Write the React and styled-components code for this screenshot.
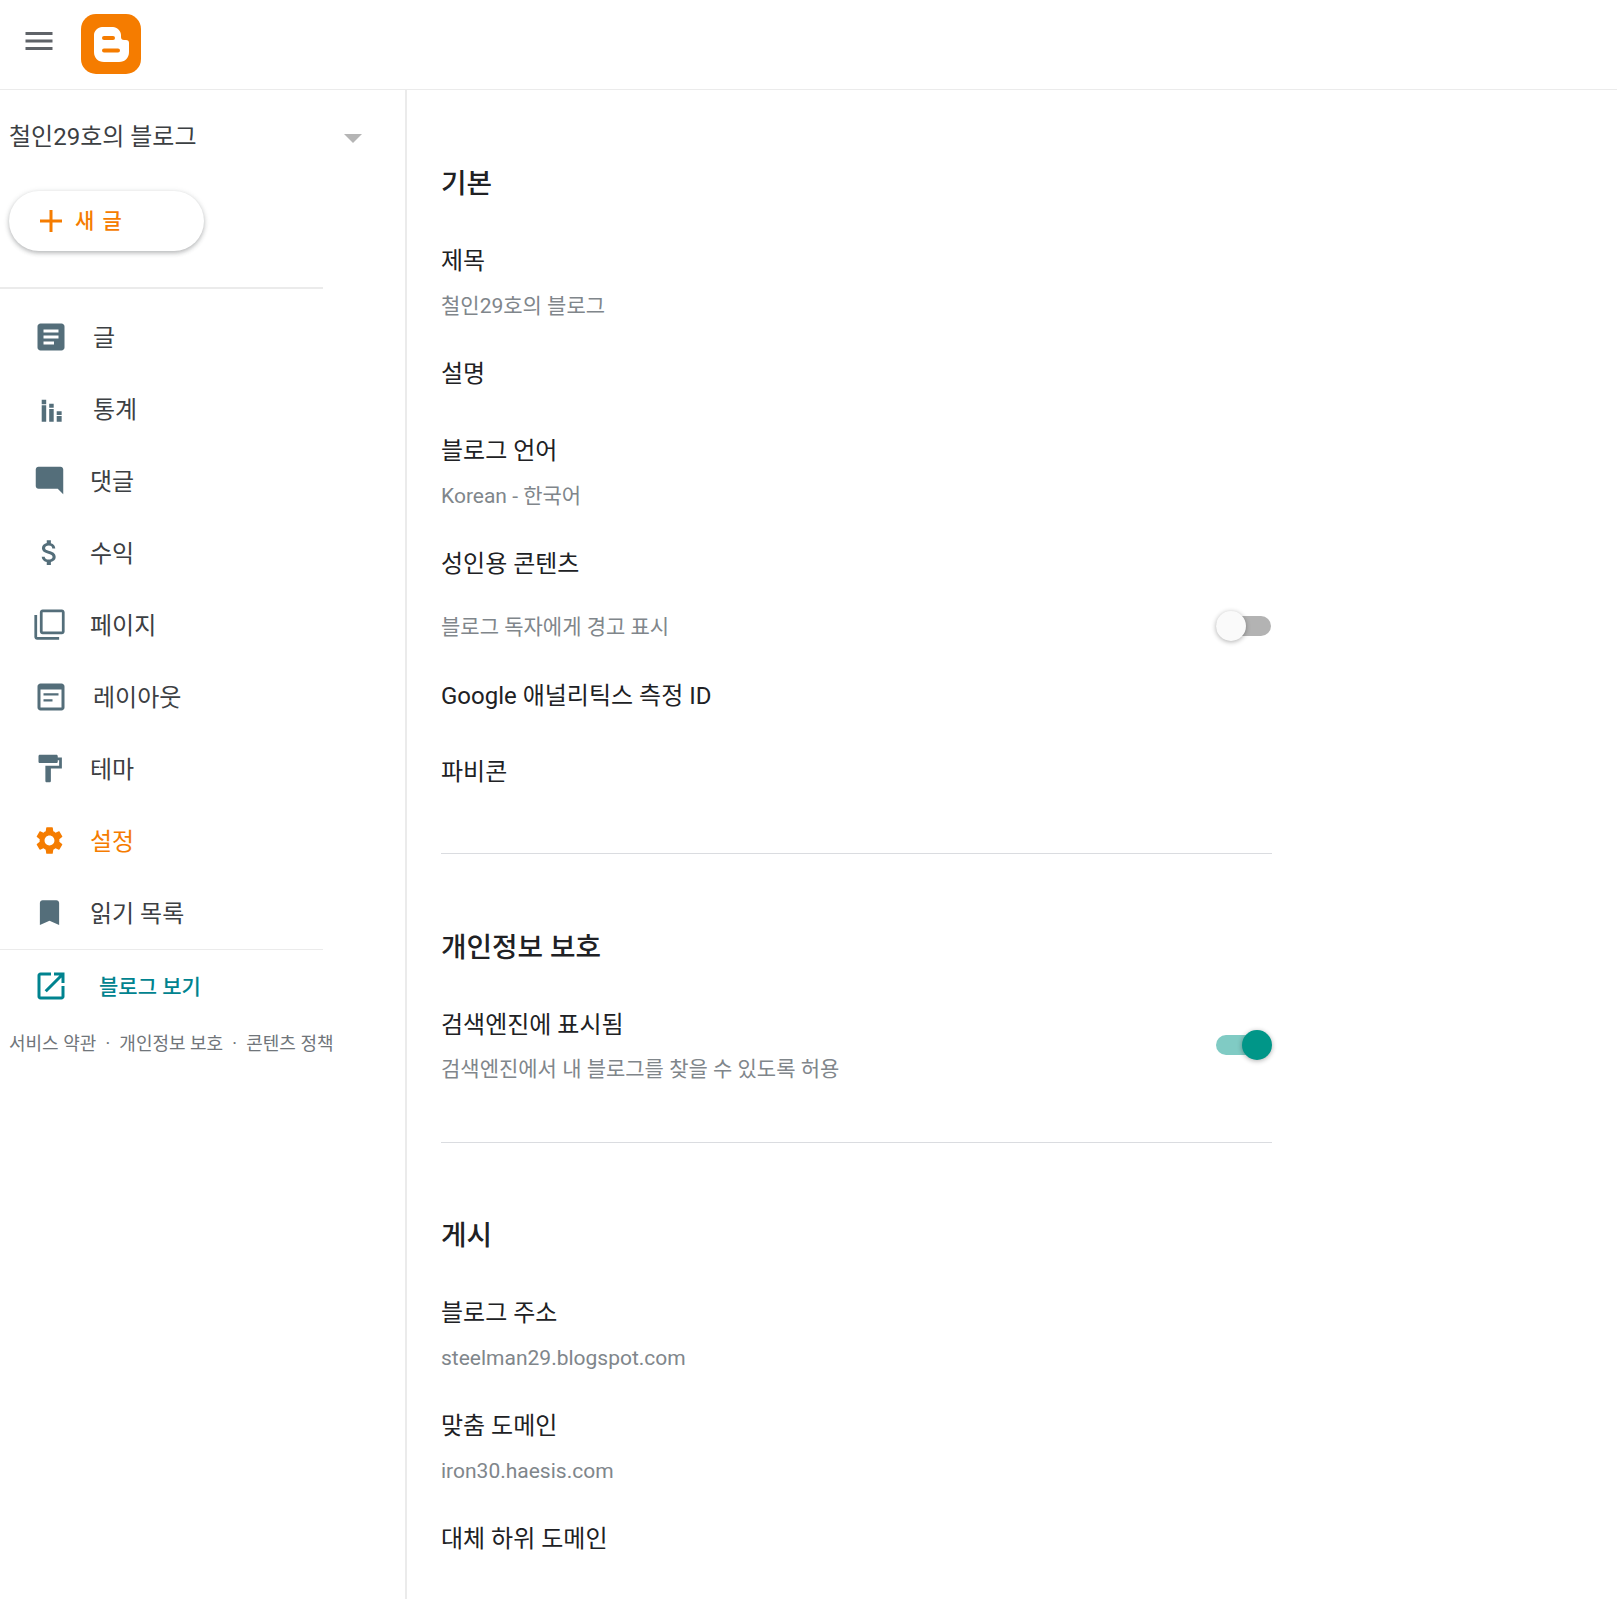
import styled, { createGlobalStyle } from "styled-components";

const GlobalStyle = createGlobalStyle`
  html, body {
    margin: 0;
    padding: 0;
    background: #ffffff;
  }
  body {
    font-family: Roboto, "Noto Sans CJK KR", sans-serif;
    color: #202124;
  }
`;

const Page = styled.div`
  height: 100vh;
  overflow: hidden;
  display: flex;
  flex-direction: column;
`;

const TopBar = styled.header`
  flex: none;
  box-sizing: border-box;
  height: 90px;
  display: flex;
  align-items: center;
  padding: 0 0 2px 21px;
  gap: 24px;
  border-bottom: 1px solid #ebebeb;
`;

const MenuButton = styled.svg`
  width: 36px;
  height: 36px;
  margin-bottom: 6px;
  fill: #5f6368;
`;

const Body = styled.div`
  flex: 1;
  display: flex;
  min-height: 0;
`;

const Sidebar = styled.aside`
  flex: none;
  box-sizing: border-box;
  width: 407px;
  border-right: 2px solid #ebebeb;
`;

const BlogPicker = styled.div`
  height: 92px;
  display: flex;
  align-items: center;
  justify-content: space-between;
  padding: 0 43px 0 9px;
`;

const BlogName = styled.span`
  padding-bottom: 4px;
  font-size: 24px;
  color: #3c4043;
`;

const Caret = styled.span`
  margin-top: 4px;
  border-top: 9px solid #b5b5b5;
  border-left: 9px solid transparent;
  border-right: 9px solid transparent;
`;

const NewPost = styled.button`
  box-sizing: border-box;
  display: flex;
  align-items: center;
  gap: 13px;
  width: 195px;
  height: 60px;
  margin: 9px 0 36px 9px;
  padding: 0 0 0 31px;
  border: 0;
  border-radius: 30px;
  background: #ffffff;
  box-shadow: 0 2px 4px rgba(60, 64, 67, 0.3), 0 1px 6px rgba(60, 64, 67, 0.12);
  color: #f57c00;
  font-family: inherit;
  font-size: 21px;
  font-weight: 500;
  letter-spacing: 1.5px;
  span {
    padding-bottom: 4px;
  }
`;

const Nav = styled.nav`
  width: 323px;
  border-top: 2px solid #ebebeb;
  padding-top: 12px;
  border-bottom: 1px solid #ebebeb;
`;

const NavItem = styled.a`
  height: 72px;
  display: flex;
  align-items: center;
  padding-left: 33px;
  font-size: 24px;
  color: ${props => (props.$active ? "#f57c00" : "#3c4043")};
`;

const NavIcon = styled.svg`
  flex: none;
  width: ${props => (props.$small ? "33px" : "36px")};
  height: ${props => (props.$small ? "33px" : "36px")};
  margin: ${props => (props.$small ? "0.5px 2.5px 2.5px -0.5px" : "0")};
  fill: ${props => (props.$active ? "#f57c00" : "#546e7a")};
`;

const NavText = styled.span`
  padding-bottom: 4px;
  margin-left: ${props => (props.$wide ? "24px" : "22px")};
`;

const ViewBlog = styled.a`
  height: 70px;
  display: flex;
  align-items: center;
  padding-left: 33px;
  font-size: 21px;
  font-weight: 500;
  color: #00838f;
  svg {
    flex: none;
    width: 36px;
    height: 36px;
    margin-top: 2px;
    fill: #00838f;
  }
  span {
    margin-left: 30px;
  }
`;

const Legal = styled.div`
  display: flex;
  gap: 9.2px;
  padding: 10px 0 0 9px;
  font-size: 18px;
  line-height: 28px;
  color: #70757a;
  white-space: nowrap;
`;

const Main = styled.main`
  flex: 1;
  padding-left: 34px;
`;

const Heading = styled.h2`
  margin: 0 0 19px;
  font-size: 27.75px;
  line-height: 40px;
  font-weight: 500;
  color: #202124;
`;

const Section = styled.section`
  width: 831px;
  padding: ${props => (props.$last ? "73px" : "74px")} 0 43px;
  border-bottom: ${props => (props.$last ? "0" : "1px solid #dadce0")};
`;

const Field = styled.div`
  box-sizing: border-box;
  min-height: ${props => (props.$tall ? "77px" : "76px")};
  padding: 20px 0 15px;
`;

const Label = styled.div`
  font-size: 24px;
  line-height: 36px;
  color: #202124;
`;

const Value = styled.div`
  margin-top: 12px;
  font-size: 21px;
  line-height: 30px;
  color: #80868b;
`;

const ToggleRow = styled.div`
  height: 46px;
  margin-bottom: 10px;
  display: flex;
  align-items: center;
  justify-content: space-between;
  font-size: 21px;
  color: #80868b;
`;

const ToggleField = styled.div`
  display: flex;
  align-items: center;
  justify-content: space-between;
  ${Value} {
    margin-top: 11px;
  }
`;

const Track = styled.span`
  position: relative;
  flex: none;
  width: 55px;
  height: 20px;
  margin: ${props => (props.$on ? "4px" : "2px")} 1px 0 0;
  border-radius: 10px;
  background: ${props => (props.$on ? "#80cbc4" : "#b3b3b3")};
`;

const Thumb = styled.span`
  position: absolute;
  top: -5px;
  left: ${props => (props.$on ? "26px" : "0")};
  width: 30px;
  height: 30px;
  border-radius: 50%;
  background: ${props => (props.$on ? "#009688" : "#fafafa")};
  box-shadow: 0 1px 5px rgba(0, 0, 0, 0.32);
`;

const Toggle = ({ on }) => (
  <Track $on={on}>
    <Thumb $on={on} />
  </Track>
);

const navItems = [
  {
    label: "글",
    wide: true,
    icon: <path d="M19 3H5c-1.1 0-2 .9-2 2v14c0 1.1.9 2 2 2h14c1.1 0 2-.9 2-2V5c0-1.1-.9-2-2-2zm-5 14H7v-2h7v2zm3-4H7v-2h10v2zm0-4H7V7h10v2z" />,
  },
  {
    label: "통계",
    wide: true,
    icon: (
      <path d="M5.8 5.8h3v3h-3zM5.8 9.5h3v11h-3zM10.8 8.5h3v2.7h-3zM10.8 12h3v8.5h-3zM15.8 13.5h3.3v2.5h-3.3zM15.8 16.7h3.3v3.8h-3.3z" />
    ),
  },
  {
    label: "댓글",
    small: true,
    icon: <path d="M21.99 4c0-1.1-.89-2-1.99-2H4c-1.1 0-2 .9-2 2v12c0 1.1.9 2 2 2h14l4 4-.01-18z" />,
  },
  {
    label: "수익",
    small: true,
    icon: <path d="M11.8 10.9c-2.27-.59-3-1.2-3-2.15 0-1.09 1.01-1.85 2.7-1.85 1.78 0 2.44.85 2.5 2.1h2.21c-.07-1.72-1.12-3.3-3.21-3.81V3h-3v2.16c-1.94.42-3.5 1.68-3.5 3.61 0 2.31 1.91 3.46 4.7 4.13 2.5.6 3 1.48 3 2.41 0 .69-.49 1.79-2.7 1.79-2.06 0-2.87-.92-2.98-2.1h-2.2c.12 2.19 1.76 3.42 3.68 3.83V21h3v-2.15c1.95-.37 3.5-1.5 3.5-3.55 0-2.84-2.43-3.81-4.7-4.4z" />,
  },
  {
    label: "페이지",
    small: true,
    icon: <path d="M3 5H1v16c0 1.1.9 2 2 2h16v-2H3V5zm18-4H7c-1.1 0-2 .9-2 2v14c0 1.1.9 2 2 2h14c1.1 0 2-.9 2-2V3c0-1.1-.9-2-2-2zm0 16H7V3h14v14z" />,
  },
  {
    label: "레이아웃",
    wide: true,
    icon: <path d="M19 3H5c-1.1 0-2 .9-2 2v14c0 1.1.9 2 2 2h14c1.1 0 2-.9 2-2V5c0-1.1-.9-2-2-2zm0 16H5V7h14v12zM7 9.5h10V11H7zM7 13.5h6V15H7z" />,
  },
  {
    label: "테마",
    small: true,
    icon: <path d="M18 4V3c0-.55-.45-1-1-1H5c-.55 0-1 .45-1 1v4c0 .55.45 1 1 1h12c.55 0 1-.45 1-1V6h1v4H9v11c0 .55.45 1 1 1h2c.55 0 1-.45 1-1v-9h8V4h-3z" />,
  },
  {
    label: "설정",
    small: true,
    active: true,
    icon: <path d="M19.14 12.94c.04-.3.06-.61.06-.94 0-.32-.02-.64-.07-.94l2.03-1.58c.18-.14.23-.41.12-.61l-1.92-3.32c-.12-.22-.37-.29-.59-.22l-2.39.96c-.5-.38-1.03-.7-1.62-.94l-.36-2.54c-.04-.24-.24-.41-.48-.41h-3.84c-.24 0-.43.17-.47.41l-.36 2.54c-.59.24-1.13.57-1.62.94l-2.39-.96c-.22-.08-.47 0-.59.22L2.74 8.87c-.12.21-.08.47.12.61l2.03 1.58c-.05.3-.09.63-.09.94s.02.64.07.94l-2.03 1.58c-.18.14-.23.41-.12.61l1.92 3.32c.12.22.37.29.59.22l2.39-.96c.5.38 1.03.7 1.62.94l.36 2.54c.05.24.24.41.48.41h3.84c.24 0 .44-.17.47-.41l.36-2.54c.59-.24 1.13-.56 1.62-.94l2.39.96c.22.08.47 0 .59-.22l1.92-3.32c.12-.22.07-.47-.12-.61l-2.01-1.58zM12 15.6c-1.98 0-3.6-1.62-3.6-3.6s1.62-3.6 3.6-3.6 3.6 1.62 3.6 3.6-1.62 3.6-3.6 3.6z" />,
  },
  {
    label: "읽기 목록",
    small: true,
    icon: <path d="M17 3H7c-1.1 0-1.99.9-1.99 2L5 21l7-3 7 3V5c0-1.1-.9-2-2-2z" />,
  },
];

const App = () => (
  <Page>
    <GlobalStyle />
    <TopBar>
      <MenuButton viewBox="0 0 24 24">
        <path d="M3 18h18v-2H3v2zm0-5h18v-2H3v2zm0-7v2h18V6H3z" />
      </MenuButton>
      <svg width="60" height="60" viewBox="0 0 60 60">
        <rect width="60" height="60" rx="15" fill="#f57c00" />
        <path
          d="M21 13h11c4 0 8 4 8 8v2c0 2 1 3 3 3h2c2 0 3 1 3 3v9c0 6-4 10-10 10H23c-6 0-10-4-10-10V21c0-4 4-8 8-8z"
          fill="#ffffff"
        />
        <rect x="21" y="22" width="13" height="4" rx="2" fill="#f57c00" />
        <rect x="21" y="34.5" width="18" height="4" rx="2" fill="#f57c00" />
      </svg>
    </TopBar>
    <Body>
      <Sidebar>
        <BlogPicker>
          <BlogName>철인29호의 블로그</BlogName>
          <Caret />
        </BlogPicker>
        <NewPost>
          <svg width="22" height="22" viewBox="0 0 22 22" fill="#f57c00">
            <path d="M9.5 0h3v9.5H22v3h-9.5V22h-3v-9.5H0v-3h9.5z" />
          </svg>
          <span>새 글</span>
        </NewPost>
        <Nav>
          {navItems.map(item => (
            <NavItem key={item.label} $active={item.active}>
              <NavIcon viewBox="0 0 24 24" $small={item.small} $active={item.active}>
                {item.icon}
              </NavIcon>
              <NavText $wide={item.wide}>{item.label}</NavText>
            </NavItem>
          ))}
        </Nav>
        <ViewBlog>
          <svg viewBox="0 0 24 24">
            <path d="M19 19H5V5h7V3H5c-1.11 0-2 .9-2 2v14c0 1.1.89 2 2 2h14c1.1 0 2-.9 2-2v-7h-2v7zM14 3v2h3.59l-9.83 9.83 1.41 1.41L19 6.41V10h2V3h-7z" />
          </svg>
          <span>블로그 보기</span>
        </ViewBlog>
        <Legal>
          <span>서비스 약관</span>
          <span>·</span>
          <span>개인정보 보호</span>
          <span>·</span>
          <span>콘텐츠 정책</span>
        </Legal>
      </Sidebar>
      <Main>
        <Section>
          <Heading>기본</Heading>
          <Field>
            <Label>제목</Label>
            <Value>철인29호의 블로그</Value>
          </Field>
          <Field $tall>
            <Label>설명</Label>
          </Field>
          <Field>
            <Label>블로그 언어</Label>
            <Value>Korean - 한국어</Value>
          </Field>
          <Field>
            <Label>성인용 콘텐츠</Label>
          </Field>
          <ToggleRow>
            블로그 독자에게 경고 표시
            <Toggle />
          </ToggleRow>
          <Field>
            <Label>Google 애널리틱스 측정 ID</Label>
          </Field>
          <Field>
            <Label>파비콘</Label>
          </Field>
        </Section>
        <Section>
          <Heading>개인정보 보호</Heading>
          <ToggleField>
            <Field>
              <Label>검색엔진에 표시됨</Label>
              <Value>검색엔진에서 내 블로그를 찾을 수 있도록 허용</Value>
            </Field>
            <Toggle on />
          </ToggleField>
        </Section>
        <Section $last>
          <Heading>게시</Heading>
          <Field>
            <Label>블로그 주소</Label>
            <Value>steelman29.blogspot.com</Value>
          </Field>
          <Field>
            <Label>맞춤 도메인</Label>
            <Value>iron30.haesis.com</Value>
          </Field>
          <Field>
            <Label>대체 하위 도메인</Label>
          </Field>
        </Section>
      </Main>
    </Body>
  </Page>
);

export default App;
